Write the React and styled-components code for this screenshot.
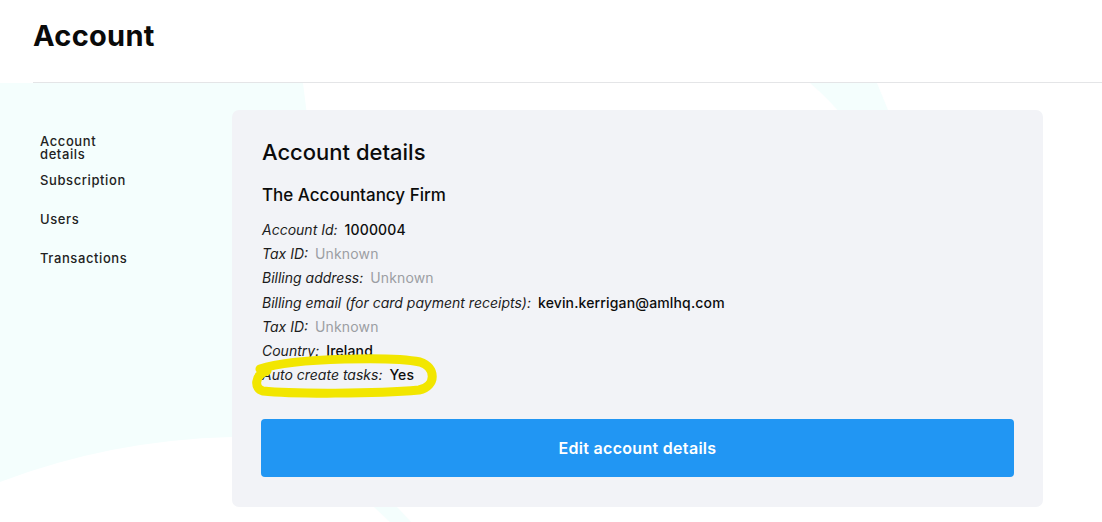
import React from 'react'
import styled, { createGlobalStyle } from 'styled-components'

const GlobalStyle = createGlobalStyle`
    html, body{
        margin:0;
        padding:0;
        background:#fff;
    }
    body{
        font-family: Inter, "Noto Sans", "Liberation Sans", sans-serif;
        color:#111;
    }
`

const Page = styled.div`
    position: relative;
    width:1102px;
    height:522px;
    overflow:hidden;
    background:#fff;
`

// faint decorative shapes behind the content
const Backdrop = styled.svg`
    position: absolute;
    top:0;
    left:0;
    z-index:0;
`

const Header = styled.header`
    position: relative;
    z-index:1;
    margin-left:33px;
    height:82px;
    border-bottom:1px solid #e4e5e7;
    box-sizing:content-box;
    h1{
        margin:0;
        padding-top:19px;
        font-size:29px;
        line-height:34px;
        font-weight:700;
        color:#0a0a0a;
        letter-spacing:0.3px;
    }
`

const Body = styled.div`
    position: relative;
    z-index:1;
    display:grid;
    grid-template-columns:192px 811px;
    padding:27px 0 0 40px;
`

const Nav = styled.nav`
    display:flex;
    flex-direction:column;
    padding-top:12px;
`

const NavItem = styled.div`
    height:39px;
    box-sizing:border-box;
    padding-top:13px;
    max-width:72px;
    font-size:13px;
    line-height:13px;
    font-weight:500;
    letter-spacing:0.6px;
    color:#222;
    white-space:${p => p.$nowrap ? 'nowrap' : 'normal'};
`

const Card = styled.section`
    background:#f2f3f7;
    border-radius:7px;
    height:397px;
    box-sizing:border-box;
    padding:29px 29px 29px 29px;
    display:flex;
    flex-direction:column;
    h2{
        margin:0 0 0 1px;
        font-size:22px;
        line-height:26px;
        font-weight:500;
        color:#0b0b0b;
    }
    h3{
        margin:19px 0 0 1px;
        font-size:17px;
        line-height:22px;
        font-weight:500;
        color:#0b0b0b;
    }
`

const Rows = styled.div`
    margin-top:12px;
    margin-left:1px;
    display:flex;
    flex-direction:column;
`

const Row = styled.div`
    position: relative;
    font-size:14px;
    line-height:24.2px;
    em{
        position: relative;
        z-index:1;
        font-style:italic;
        color:#1c1c1c;
        margin-right:7px;
    }
    span{
        position: relative;
        z-index:1;
        font-weight:${p => p.$muted ? 400 : 500};
        color:${p => p.$muted ? '#9c9ea3' : '#0d0d0d'};
        letter-spacing:0.15px;
    }
`

// hand-drawn marker loop round the row
const Highlight = styled.svg`
    position: absolute;
    left:-16px;
    top:-23px;
    z-index:2;
    pointer-events:none;
`

const EditButton = styled.button`
    margin-top:32px;
    height:58px;
    width:100%;
    border:none;
    border-radius:4px;
    background:#2196f3;
    color:#fff;
    font-family:inherit;
    font-size:16px;
    font-weight:600;
    letter-spacing:0.3px;
    cursor:pointer;
`

const rows = [
    {label:'Account Id:', value:'1000004'},
    {label:'Tax ID:', value:'Unknown', muted:true},
    {label:'Billing address:', value:'Unknown', muted:true},
    {label:'Billing email (for card payment receipts):', value:'kevin.kerrigan@amlhq.com'},
    {label:'Tax ID:', value:'Unknown', muted:true},
    {label:'Country:', value:'Ireland'},
    {label:'Auto create tasks:', value:'Yes', marked:true},
]

export default function App(){
    return (
        <Page>
            <GlobalStyle/>
            <Backdrop width='1102' height='522' viewBox='0 0 1102 522'>
                <path d='M0 83 L303 83 L330 300 L300 437 L232 437 Q110 440 0 482 Z' fill='#f4fefd'/>
                <path d='M810 83 L877 83 Q884 100 892 120 L846 120 Q830 100 810 83 Z' fill='#f4fefd'/>
                <path d='M374 507 L397 507 L411 522 L390 522 Z' fill='#f4fefd'/>
            </Backdrop>
            <Header>
                <h1>Account</h1>
            </Header>
            <Body>
                <Nav>
                    <NavItem>Account details</NavItem>
                    <NavItem $nowrap>Subscription</NavItem>
                    <NavItem $nowrap>Users</NavItem>
                    <NavItem $nowrap>Transactions</NavItem>
                </Nav>
                <Card>
                    <h2>Account details</h2>
                    <h3>The Accountancy Firm</h3>
                    <Rows>
                        {rows.map((r,i)=>(
                            <Row key={i} $muted={r.muted}>
                                <em>{r.label}</em><span>{r.value}</span>
                                {r.marked&&
                                    <Highlight width='200' height='62' viewBox='0 0 200 62'>
                                        <path
                                            d='M14 29 C50 17 150 17 174 22 C190 27 191 46 173 50 C130 54 45 54 17 51 C8 49 8 35 21 31'
                                            fill='none' stroke='#f2e600' strokeWidth='9' strokeLinecap='round' strokeLinejoin='round'/>
                                    </Highlight>
                                }
                            </Row>
                        ))}
                    </Rows>
                    <EditButton>Edit account details</EditButton>
                </Card>
            </Body>
        </Page>
    )
}
